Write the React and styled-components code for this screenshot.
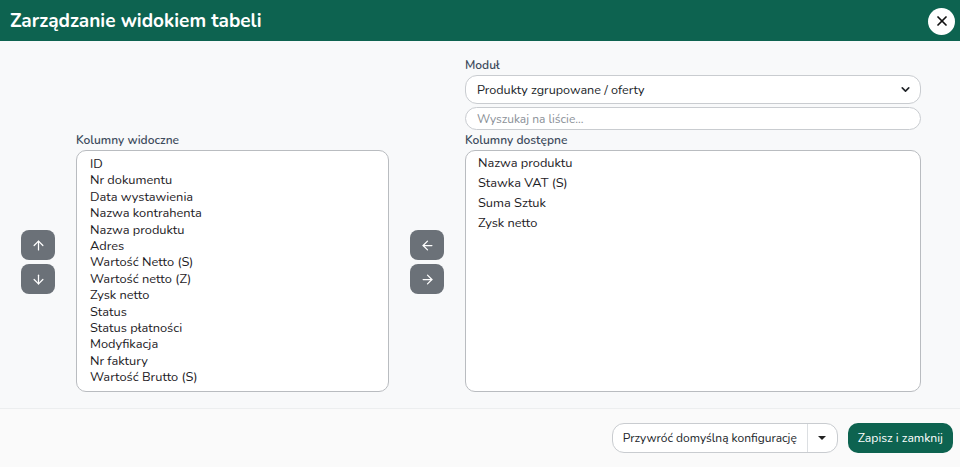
import styled, { createGlobalStyle } from "styled-components";
import { ArrowUp, ArrowDown, ArrowLeft, ArrowRight, X, ChevronDown } from "lucide-react";

const visibleColumns = [
  "ID",
  "Nr dokumentu",
  "Data wystawienia",
  "Nazwa kontrahenta",
  "Nazwa produktu",
  "Adres",
  "Wartość Netto (S)",
  "Wartość netto (Z)",
  "Zysk netto",
  "Status",
  "Status płatności",
  "Modyfikacja",
  "Nr faktury",
  "Wartość Brutto (S)",
];

const availableColumns = ["Nazwa produktu", "Stawka VAT (S)", "Suma Sztuk", "Zysk netto"];

const App = () => {
  return (
    <>
      <GlobalStyle />
      <Modal>
        <Header>
          <Title>Zarządzanie widokiem tabeli</Title>
          <CloseButton aria-label="Zamknij">
            <X size={16} strokeWidth={2.6} />
          </CloseButton>
        </Header>

        <Body>
          <ModuleBlock>
            <Label>Moduł</Label>
            <SelectBox>
              <span>Produkty zgrupowane / oferty</span>
              <ChevronDown size={13} strokeWidth={3} />
            </SelectBox>
            <SearchInput placeholder="Wyszukaj na liście..." />
          </ModuleBlock>

          <ButtonStack $col={1}>
            <MoveButton><ArrowUp size={15} strokeWidth={2} /></MoveButton>
            <MoveButton><ArrowDown size={15} strokeWidth={2} /></MoveButton>
          </ButtonStack>

          <ListBlock $col={2}>
            <Label>Kolumny widoczne</Label>
            <ListBox>
              {visibleColumns.map((c) => (
                <Item key={c}>{c}</Item>
              ))}
            </ListBox>
          </ListBlock>

          <ButtonStack $col={3}>
            <MoveButton><ArrowLeft size={15} strokeWidth={2} /></MoveButton>
            <MoveButton><ArrowRight size={15} strokeWidth={2} /></MoveButton>
          </ButtonStack>

          <ListBlock $col={4}>
            <Label>Kolumny dostępne</Label>
            <ListBox $spaced>
              {availableColumns.map((c) => (
                <Item key={c} $spaced>{c}</Item>
              ))}
            </ListBox>
          </ListBlock>
        </Body>

        <Footer>
          <SplitButton>
            <SplitMain>Przywróć domyślną konfigurację</SplitMain>
            <SplitToggle>
              <Caret />
            </SplitToggle>
          </SplitButton>
          <SaveButton>Zapisz i zamknij</SaveButton>
        </Footer>
      </Modal>
    </>
  );
};

export default App;

const GlobalStyle = createGlobalStyle`
  html, body {
    margin: 0;
    padding: 0;
    background: #f8f9fa;
  }
  body {
    font-family: "Nunito", "Lato", "Open Sans", sans-serif;
    color: #212529;
  }
  * { box-sizing: border-box; }
`;

const Modal = styled.div`
  width: 960px;
  height: 467px;
  display: flex;
  flex-direction: column;
  background: #f8f9fa;
`;

const Header = styled.div`
  height: 41px;
  flex-shrink: 0;
  background: #0d6350;
  display: flex;
  align-items: center;
  justify-content: space-between;
  padding: 0 5px 0 10px;
`;

const Title = styled.h1`
  margin: 0;
  font-size: 19px;
  font-weight: 700;
  color: #ffffff;
`;

const CloseButton = styled.button`
  width: 27px;
  height: 27px;
  border-radius: 50%;
  border: none;
  background: #ffffff;
  color: #111;
  display: flex;
  align-items: center;
  justify-content: center;
  padding: 0;
  margin-top: 1px;
`;

const Body = styled.div`
  display: grid;
  grid-template-columns: 34px 313px 34px 456px;
  grid-template-rows: auto auto;
  column-gap: 21px;
  row-gap: 2px;
  padding: 16px 39px 16px 21px;
  border-bottom: 1px solid #eceeef;
`;

const ModuleBlock = styled.div`
  grid-column: 4;
  grid-row: 1;
  display: flex;
  flex-direction: column;
`;

const Label = styled.div`
  font-size: 12px;
  font-weight: 600;
  color: #3d4b5c;
  margin-bottom: 2px;
  line-height: 16px;
`;

const SelectBox = styled.div`
  height: 29px;
  border: 1px solid #c9ccd0;
  border-radius: 12px;
  background: #ffffff;
  display: flex;
  align-items: center;
  justify-content: space-between;
  padding: 0 8px 0 11px;
  font-size: 12.6px;
  color: #212529;
`;

const SearchInput = styled.input`
  margin-top: 3px;
  height: 23px;
  border: 1px solid #c9ccd0;
  border-radius: 12px;
  background: #ffffff;
  padding: 0 11px;
  font-family: inherit;
  font-size: 12px;
  outline: none;
  &::placeholder {
    color: #8a9097;
  }
`;

const ButtonStack = styled.div`
  grid-column: ${(p) => p.$col};
  grid-row: 2;
  align-self: center;
  display: flex;
  flex-direction: column;
  gap: 4px;
`;

const MoveButton = styled.button`
  width: 34px;
  height: 30px;
  border: none;
  border-radius: 8px;
  background: #6b7178;
  color: #ffffff;
  display: flex;
  align-items: center;
  justify-content: center;
  padding: 0;
`;

const ListBlock = styled.div`
  grid-column: ${(p) => p.$col};
  grid-row: 2;
  display: flex;
  flex-direction: column;
`;

const ListBox = styled.div`
  height: 242px;
  border: 1px solid #b9bcc0;
  border-radius: 10px;
  background: #ffffff;
  padding: ${(p) => (p.$spaced ? "2px 12px" : "5px 13px")};
  overflow: hidden;
`;

const Item = styled.div`
  font-size: 12.8px;
  line-height: ${(p) => (p.$spaced ? "20px" : "16.4px")};
  color: #1d2125;
  white-space: nowrap;
`;

const Footer = styled.div`
  flex: 1;
  display: flex;
  justify-content: flex-end;
  align-items: center;
  gap: 10px;
  padding: 0 7px 0 0;
  background: #fafafa;
`;

const SplitButton = styled.div`
  display: flex;
  height: 30px;
  border: 1px solid #c9ccd0;
  border-radius: 12px;
  background: #ffffff;
  overflow: hidden;
`;

const SplitMain = styled.button`
  border: none;
  background: transparent;
  font-family: inherit;
  font-size: 12px;
  color: #212529;
  padding: 0 10px;
  border-right: 1px solid #dcdfe2;
`;

const SplitToggle = styled.button`
  width: 29px;
  border: none;
  background: transparent;
  display: flex;
  align-items: center;
  justify-content: center;
  padding: 0;
`;

const Caret = styled.span`
  width: 0;
  height: 0;
  border-left: 4px solid transparent;
  border-right: 4px solid transparent;
  border-top: 4px solid #222;
`;

const SaveButton = styled.button`
  height: 30px;
  border: none;
  border-radius: 10px;
  background: #0d6350;
  color: #ffffff;
  font-family: inherit;
  font-size: 12.2px;
  padding: 0 10px;
`;
